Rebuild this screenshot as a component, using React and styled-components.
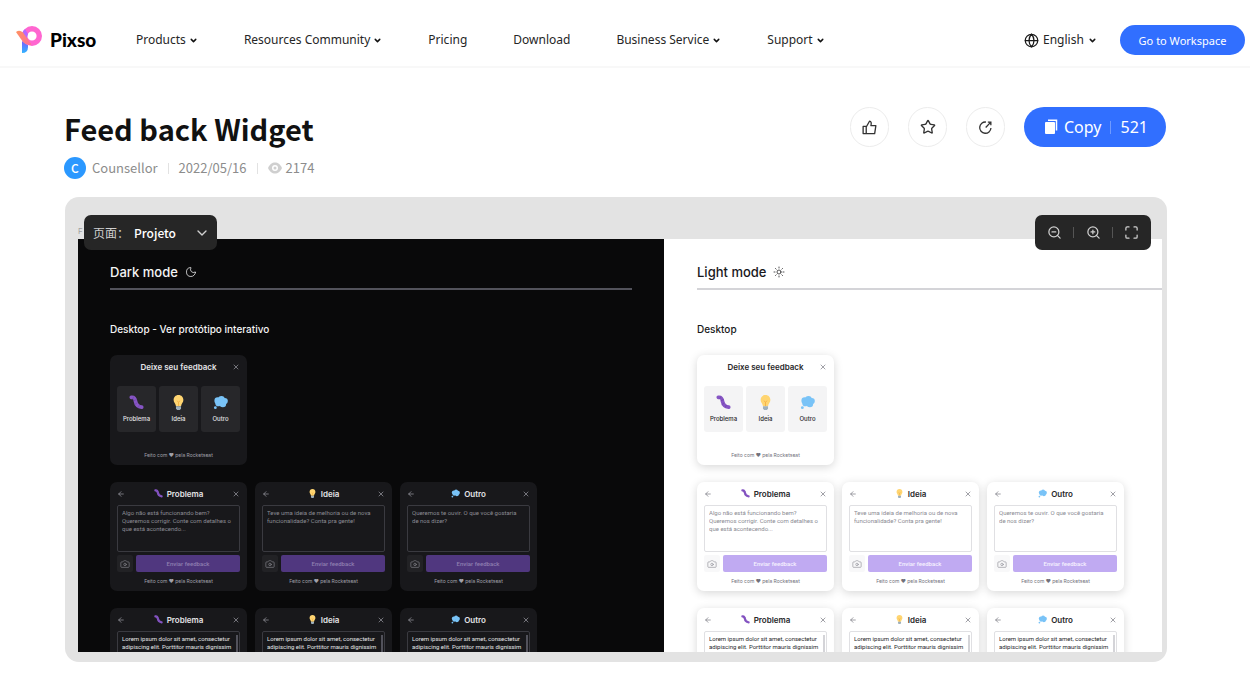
import React from "react";
import styled, {createGlobalStyle, ThemeProvider} from "styled-components";
import {
   ArrowLeft,
   Camera,
   ChevronDown,
   Globe,
   Maximize,
   Moon,
   Star,
   Sun,
   X,
   ZoomIn,
   ZoomOut,
} from "lucide-react";

const sans = `"Noto Sans", "Noto Sans CJK SC", sans-serif`;
const cjk = `"Noto Sans CJK SC", "Noto Sans", sans-serif`;
const inter = `Inter, "Noto Sans", sans-serif`;

const GlobalStyle = createGlobalStyle`
   * {
      box-sizing: border-box;
   }
   body {
      margin: 0;
      background: #fff;
      font-family: ${sans};
      color: #1a1a1a;
   }
   button, select, textarea {
      font-family: inherit;
      color: inherit;
      border: 0;
      margin: 0;
      padding: 0;
      background: none;
   }
   svg {
      display: block;
      flex: none;
   }
`;

const dark = {
   page: "#09090a",
   title: "#f4f4f5",
   rule: "#52525b",
   card: "#18181b",
   tile: "#27272a",
   camera: "#222225",
   border: "#3a3a40",
   text: "#e4e4e7",
   placeholder: "#8b8b93",
   footer: "#a1a1aa",
   button: "#50377f",
   buttonText: "#8f7fb0",
   thumb: "#52525b",
   shadow: "none",
};

const light = {
   page: "#ffffff",
   title: "#18181b",
   rule: "#d4d4d8",
   card: "#ffffff",
   tile: "#f4f4f5",
   camera: "#f8f8f9",
   border: "#e0e0e3",
   text: "#27272a",
   placeholder: "#8b8b93",
   footer: "#71717a",
   button: "#c0aaf2",
   buttonText: "#f6f2ff",
   thumb: "#d4d4d8",
   shadow: "0 2px 10px rgba(0, 0, 0, 0.16)",
};

/* Site header */

const Header = styled.header`
   display: flex;
   align-items: center;
   height: 68px;
   padding: 14px 5px 0 16px;
   border-bottom: 2px solid #f8f8f8;
`;

const HeaderRow = styled.div`
   display: flex;
   flex: 1;
   align-items: center;
`;

const Brand = styled.a`
   display: flex;
   align-items: center;
   gap: 8px;
   width: 80px;
   margin-right: 40px;
   color: #000;
   font: 900 19px/24px Lato, sans-serif;
   text-decoration: none;
`;

const Nav = styled.nav`
   display: flex;
   gap: 46px;
   flex: 1;
`;

const NavLink = styled.a`
   display: flex;
   align-items: center;
   gap: 3px;
   color: #262626;
   font-size: 12px;
   line-height: 20px;
   text-decoration: none;
   white-space: nowrap;
   svg {
      color: #111;
   }
`;

const Language = styled.label`
   display: flex;
   align-items: center;
   gap: 4px;
   margin-right: 23px;
   select {
      appearance: none;
      color: #262626;
      font-size: 12px;
      line-height: 20px;
   }
`;

const WorkspaceButton = styled.button`
   width: 125px;
   height: 30px;
   border-radius: 15px;
   background: #316fff;
   color: #fff;
   font-size: 11px;
`;

/* Title block */

const Main = styled.main`
   padding: 39px 83px 0 64px;
`;

const Intro = styled.div`
   display: flex;
   justify-content: space-between;
   align-items: flex-start;
   height: 90px;
   padding-right: 1px;
`;

const Title = styled.h1`
   margin: 0;
   color: #111;
   font: 700 29px/42px ${cjk};
`;

const Meta = styled.div`
   display: flex;
   align-items: center;
   height: 38px;
   color: #8c8c8c;
   font: 400 13px/20px ${cjk};
`;

const Avatar = styled.span`
   width: 22px;
   height: 22px;
   margin-right: 6px;
   border-radius: 50%;
   background: #2b98ff;
   color: #fff;
   font-size: 12px;
   font-weight: 500;
   line-height: 22px;
   text-align: center;
`;

const MetaSplit = styled.span`
   width: 1px;
   height: 11px;
   margin: 0 10px;
   background: #e2e2e2;
`;

const Views = styled.span`
   display: flex;
   align-items: center;
   gap: 4px;
`;

const Actions = styled.div`
   display: flex;
   gap: 19px;
`;

const RoundButton = styled.button`
   display: flex;
   justify-content: center;
   align-items: center;
   width: 39px;
   height: 40px;
   border: 1px solid #ececec;
   border-radius: 20px;
   color: #333;
`;

const CopyButton = styled.button`
   display: flex;
   align-items: center;
   width: 142px;
   height: 40px;
   padding: 0 20px;
   border-radius: 20px;
   background: #316fff;
   color: #fff;
   font-size: 16px;
   gap: 6px;
`;

const CopyCount = styled.span`
   margin-left: 3px;
   padding-left: 9px;
   border-left: 1px solid #6f9aff;
   line-height: 13px;
`;

/* Design viewer */

const Viewer = styled.section`
   position: relative;
   height: calc(100vh - 211px);
   min-height: 300px;
   margin-left: 1px;
   padding: 42px 5px 10px 13px;
   border-radius: 14px;
   background: #e3e3e3;
`;

const FrameName = styled.span`
   position: absolute;
   top: 28px;
   left: 13px;
   color: #a0a0a0;
   font: 400 8px/12px ${inter};
`;

const Floating = styled.div`
   position: absolute;
   z-index: 1;
   top: 18px;
   display: flex;
   align-items: center;
   height: 35px;
   border-radius: 7px;
   background: #262626;
   color: #d0d0d0;
`;

const PagePicker = styled(Floating).attrs({as: "label"})`
   left: 19px;
   width: 133px;
   padding: 0 7px 0 9px;
   font: 400 12px/18px ${cjk};
   select {
      flex: 1;
      appearance: none;
      margin-left: 5px;
      color: #fff;
      font: 500 12px/18px ${cjk};
   }
`;

const ZoomBar = styled(Floating)`
   right: 16px;
   justify-content: space-between;
   width: 116px;
   padding: 0 12px;
`;

const ZoomSplit = styled.span`
   width: 1px;
   height: 11px;
   background: #555;
`;

const Stage = styled.div`
   display: flex;
   height: 100%;
   overflow: hidden;
`;

const Board = styled.div`
   flex: ${p => (p.$fill ? "1 1 0" : "0 0 586px")};
   min-width: 0;
   padding: 23px 0 0 ${p => (p.$fill ? 33 : 32)}px;
   overflow: hidden;
   background: ${p => p.theme.page};
   color: ${p => p.theme.title};
   font-family: ${inter};
`;

const BoardTitle = styled.h2`
   display: flex;
   align-items: center;
   gap: 7px;
   height: 28px;
   margin: 0 ${p => (p.$fill ? "0" : "32px")} 0 0;
   padding-bottom: 6px;
   border-bottom: 2px solid ${p => p.theme.rule};
   font-size: 13px;
   font-weight: 500;
`;

const BoardLabel = styled.h3`
   margin: 32px 0 19px;
   font-size: 10px;
   font-weight: 500;
   line-height: 14px;
`;

const CardRow = styled.div`
   display: flex;
   gap: 8px;
   margin-bottom: 17px;
`;

const Card = styled.article`
   flex: none;
   display: flex;
   flex-flow: column nowrap;
   width: 137px;
   height: ${p => (p.$tall ? 110 : 109)}px;
   padding: 0 7px;
   border-radius: 7px;
   background: ${p => p.theme.card};
   box-shadow: ${p => p.theme.shadow};
   color: ${p => p.theme.text};
`;

const CardHead = styled.div`
   display: grid;
   grid-template-columns: 8px 1fr 8px;
   align-items: center;
   height: 23px;
   color: ${p => p.theme.footer};
`;

const CardTitle = styled.h4`
   grid-column: 2;
   display: flex;
   justify-content: center;
   align-items: center;
   gap: 4px;
   margin: 0;
   color: ${p => p.theme.text};
   font-size: 8px;
   font-weight: 600;
`;

const Tiles = styled.div`
   display: grid;
   grid-template-columns: repeat(3, 1fr);
   gap: 3px;
   margin-top: 8px;
`;

const Tile = styled.button`
   display: flex;
   flex-flow: column nowrap;
   align-items: center;
   gap: 5px;
   height: 46px;
   padding-top: 9px;
   border-radius: 3px;
   background: ${p => p.theme.tile};
   font-size: 6px;
   font-weight: 500;
   line-height: 8px;
`;

const Footer = styled.p`
   margin: auto 0 6px;
   color: ${p => p.theme.footer};
   font-size: 5px;
   line-height: 8px;
   text-align: center;
`;

const Field = styled.div`
   display: flex;
   height: 47px;
   padding: 3px 1px 1px 4px;
   border: 1px solid ${p => p.theme.border};
   border-radius: 2px;
   textarea {
      flex: 1;
      min-width: 0;
      resize: none;
      outline: 0;
      overflow: hidden;
      font: 400 6px/8px Roboto, sans-serif;
   }
   textarea::placeholder {
      color: ${p => p.theme.placeholder};
      opacity: 1;
   }
`;

const Thumb = styled.span`
   width: 2px;
   height: 18px;
   background: ${p => p.theme.thumb};
`;

const CardActions = styled.div`
   display: flex;
   gap: 3px;
   height: 17px;
   margin-top: 3px;
`;

const CameraButton = styled.button`
   display: flex;
   justify-content: center;
   align-items: center;
   width: 16px;
   border-radius: 2px;
   background: ${p => p.theme.camera};
   color: ${p => p.theme.placeholder};
`;

const SendButton = styled.button`
   flex: 1;
   border-radius: 2px;
   background: ${p => p.theme.button};
   color: ${p => p.theme.buttonText};
   font: 500 6px/8px Roboto, sans-serif;
`;

function Logo() {
   return (
      <svg width="26" height="28" viewBox="0 0 26 28">
         <defs>
            <linearGradient id="leg" x1="0" y1="0" x2="0" y2="1">
               <stop offset="0" stopColor="#7a5cff" />
               <stop offset="1" stopColor="#2fb4ff" />
            </linearGradient>
            <linearGradient id="bar" x1="0" y1="0" x2="1" y2="1">
               <stop offset="0" stopColor="#ff9360" />
               <stop offset="1" stopColor="#ff6d9a" />
            </linearGradient>
         </defs>
         <path d="M6 15L12 19V21Q12 27 6 27Z" fill="url(#leg)" />
         <circle cx="16" cy="10" r="7.300" fill="none" stroke="#ff66d0" strokeWidth="5.400" />
         <path d="M9 3Q5.500 6 6 10L10 14L12 8Z" fill="#b766ff" />
         <path d="M0 6Q3.500 3.500 7 6.500L15.500 18.500Q11 20.500 7 16Z" fill="url(#bar)" />
      </svg>
   );
}

function LikeIcon() {
   return (
      <svg width="15" height="15" viewBox="0 0 16 16" fill="none" stroke="currentColor" strokeWidth="1.400" strokeLinejoin="round">
         <path d="M1.200 6.800H4.500V14.500H1.200ZM4.500 7.500L8 1.300C9.800 1.500 10.300 3 9.500 6H14.800L13.500 14.500H4.500" />
      </svg>
   );
}

function EyeIcon() {
   return (
      <svg width="14" height="12" viewBox="0 0 14 12">
         <path d="M0 6C2 2 4 .5 7 .5S12 2 14 6C12 10 10 11.500 7 11.500S2 10 0 6Z" fill="#cfcfcf" />
         <circle cx="7" cy="6" r="3" fill="#fff" />
         <circle cx="7" cy="6" r="1.500" fill="#cfcfcf" />
      </svg>
   );
}

function ShareIcon() {
   return (
      <svg width="15" height="15" viewBox="0 0 16 16" fill="none" stroke="currentColor" strokeWidth="1.400">
         <path d="M8.500 2.200A6 6 0 1 0 13.800 8.500M8.200 8L13.200 2.800M10.500 2.300H13.700V5.500" />
      </svg>
   );
}

function CopyIcon() {
   return (
      <svg width="14" height="16" viewBox="0 0 14 16">
         <path d="M4 1.200H12.500V11.500" fill="none" stroke="#fff" strokeWidth="1.500" />
         <rect x="1" y="3" width="10" height="12" rx="1" fill="#fff" />
      </svg>
   );
}

function Bug({size}) {
   return (
      <svg width={size} height={size} viewBox="0 0 16 16" fill="none" strokeLinecap="round" strokeLinejoin="round">
         <path d="M2.500 2.500C6 2 6.500 4 7 7S9 12.500 13.500 13" stroke="#8655c4" strokeWidth="4" />
         <path d="M5 2L4 4M8 5L5.500 6M8.500 8.500L6.500 10M11 11L10 13" stroke="#6b3fa6" strokeWidth=".6" />
      </svg>
   );
}

function Bulb({size}) {
   return (
      <svg width={size} height={size} viewBox="0 0 16 16">
         <path d="M8 0C4.800 0 2.800 2.300 2.800 5.200C2.800 8 5 9 5.300 12H10.700C11 9 13.200 8 13.200 5.200C13.200 2.300 11.200 0 8 0Z" fill="#ffd571" />
         <path d="M6.500 6L8 8L9.500 6M8 8V12" fill="none" stroke="#f2a93b" strokeWidth=".8" />
         <path d="M5.300 12H10.700V14.500L9.500 16H6.500L5.300 14.500Z" fill="#9fb1bd" />
      </svg>
   );
}

function Thought({size}) {
   return (
      <svg width={size} height={size} viewBox="0 0 16 16" fill="#79c3f7">
         <circle cx="5" cy="6" r="3.500" />
         <circle cx="9" cy="4.500" r="3.500" />
         <circle cx="12.500" cy="6.500" r="3.300" />
         <circle cx="5.500" cy="9" r="3" />
         <circle cx="10.500" cy="9.500" r="3.500" />
         <circle cx="2.500" cy="13.500" r="1.500" />
      </svg>
   );
}

const kinds = [
   {
      name: "Problema",
      Icon: Bug,
      hint:
         "Algo não está funcionando bem? Queremos corrigir. Conte com detalhes o que está acontecendo...",
   },
   {
      name: "Ideia",
      Icon: Bulb,
      hint: "Teve uma ideia de melhoria ou de nova funcionalidade? Conta pra gente!",
   },
   {
      name: "Outro",
      Icon: Thought,
      hint: "Queremos te ouvir. O que você gostaria\nde nos dizer?",
   },
];

const lorem =
   "Lorem ipsum dolor sit amet, consectetur adipiscing elit. Porttitor mauris dignissim";

const nav = [
   {text: "Products", menu: true},
   {text: "Resources Community", menu: true},
   {text: "Pricing"},
   {text: "Download"},
   {text: "Business Service", menu: true},
   {text: "Support", menu: true},
];

function MenuCard() {
   return (
      <Card $tall>
         <CardHead>
            <CardTitle>Deixe seu feedback</CardTitle>
            <X size={8} />
         </CardHead>
         <Tiles>
            {kinds.map(({name, Icon}) => (
               <Tile key={name}>
                  <Icon size={15} />
                  {name}
               </Tile>
            ))}
         </Tiles>
         <Footer>Feito com ♥ pela Rocketseat</Footer>
      </Card>
   );
}

function FormCard({kind, value}) {
   const {name, Icon, hint} = kind;
   return (
      <Card>
         <CardHead>
            <ArrowLeft size={8} />
            <CardTitle>
               <Icon size={9} />
               {name}
            </CardTitle>
            <X size={8} />
         </CardHead>
         <Field>
            <textarea aria-label={name} placeholder={hint} defaultValue={value} />
            {value && <Thumb />}
         </Field>
         {!value && (
            <>
               <CardActions>
                  <CameraButton aria-label="Capturar tela">
                     <Camera size={10} strokeWidth={1.5} />
                  </CameraButton>
                  <SendButton>Enviar feedback</SendButton>
               </CardActions>
               <Footer>Feito com ♥ pela Rocketseat</Footer>
            </>
         )}
      </Card>
   );
}

function ModeBoard({title, Icon, label, theme, fill}) {
   return (
      <ThemeProvider theme={theme}>
         <Board $fill={fill}>
            <BoardTitle $fill={fill}>
               {title}
               <Icon size={12} strokeWidth={1.5} />
            </BoardTitle>
            <BoardLabel>{label}</BoardLabel>
            <CardRow>
               <MenuCard />
            </CardRow>
            <CardRow>
               {kinds.map(kind => (
                  <FormCard key={kind.name} kind={kind} />
               ))}
            </CardRow>
            <CardRow>
               {kinds.map(kind => (
                  <FormCard key={kind.name} kind={kind} value={lorem} />
               ))}
            </CardRow>
         </Board>
      </ThemeProvider>
   );
}

function App() {
   return (
      <>
         <GlobalStyle />
         <Header>
            <HeaderRow>
               <Brand href="#">
                  <Logo />
                  Pixso
               </Brand>
               <Nav>
                  {nav.map(({text, menu}) => (
                     <NavLink key={text} href="#">
                        {text}
                        {menu && <ChevronDown size={9} strokeWidth={4} />}
                     </NavLink>
                  ))}
               </Nav>
               <Language>
                  <Globe size={15} />
                  <select aria-label="Language">
                     <option>English</option>
                  </select>
                  <ChevronDown size={9} strokeWidth={4} />
               </Language>
               <WorkspaceButton>Go to Workspace</WorkspaceButton>
            </HeaderRow>
         </Header>
         <Main>
            <Intro>
               <div>
                  <Title>Feed back Widget</Title>
                  <Meta>
                     <Avatar>C</Avatar>
                     Counsellor
                     <MetaSplit />
                     2022/05/16
                     <MetaSplit />
                     <Views>
                        <EyeIcon />
                        2174
                     </Views>
                  </Meta>
               </div>
               <Actions>
                  <RoundButton aria-label="Like">
                     <LikeIcon />
                  </RoundButton>
                  <RoundButton aria-label="Favorite">
                     <Star size={16} strokeWidth={2} />
                  </RoundButton>
                  <RoundButton aria-label="Share">
                     <ShareIcon />
                  </RoundButton>
                  <CopyButton>
                     <CopyIcon />
                     Copy
                     <CopyCount>521</CopyCount>
                  </CopyButton>
               </Actions>
            </Intro>
            <Viewer>
               <FrameName>F</FrameName>
               <PagePicker>
                  页面：
                  <select>
                     <option>Projeto</option>
                  </select>
                  <ChevronDown size={16} />
               </PagePicker>
               <ZoomBar>
                  <ZoomOut size={15} />
                  <ZoomSplit />
                  <ZoomIn size={15} />
                  <ZoomSplit />
                  <Maximize size={15} />
               </ZoomBar>
               <Stage>
                  <ModeBoard
                     title="Dark mode"
                     Icon={Moon}
                     label="Desktop - Ver protótipo interativo"
                     theme={dark}
                  />
                  <ModeBoard
                     title="Light mode"
                     Icon={Sun}
                     label="Desktop"
                     theme={light}
                     fill
                  />
               </Stage>
            </Viewer>
         </Main>
      </>
   );
}

export default App;
